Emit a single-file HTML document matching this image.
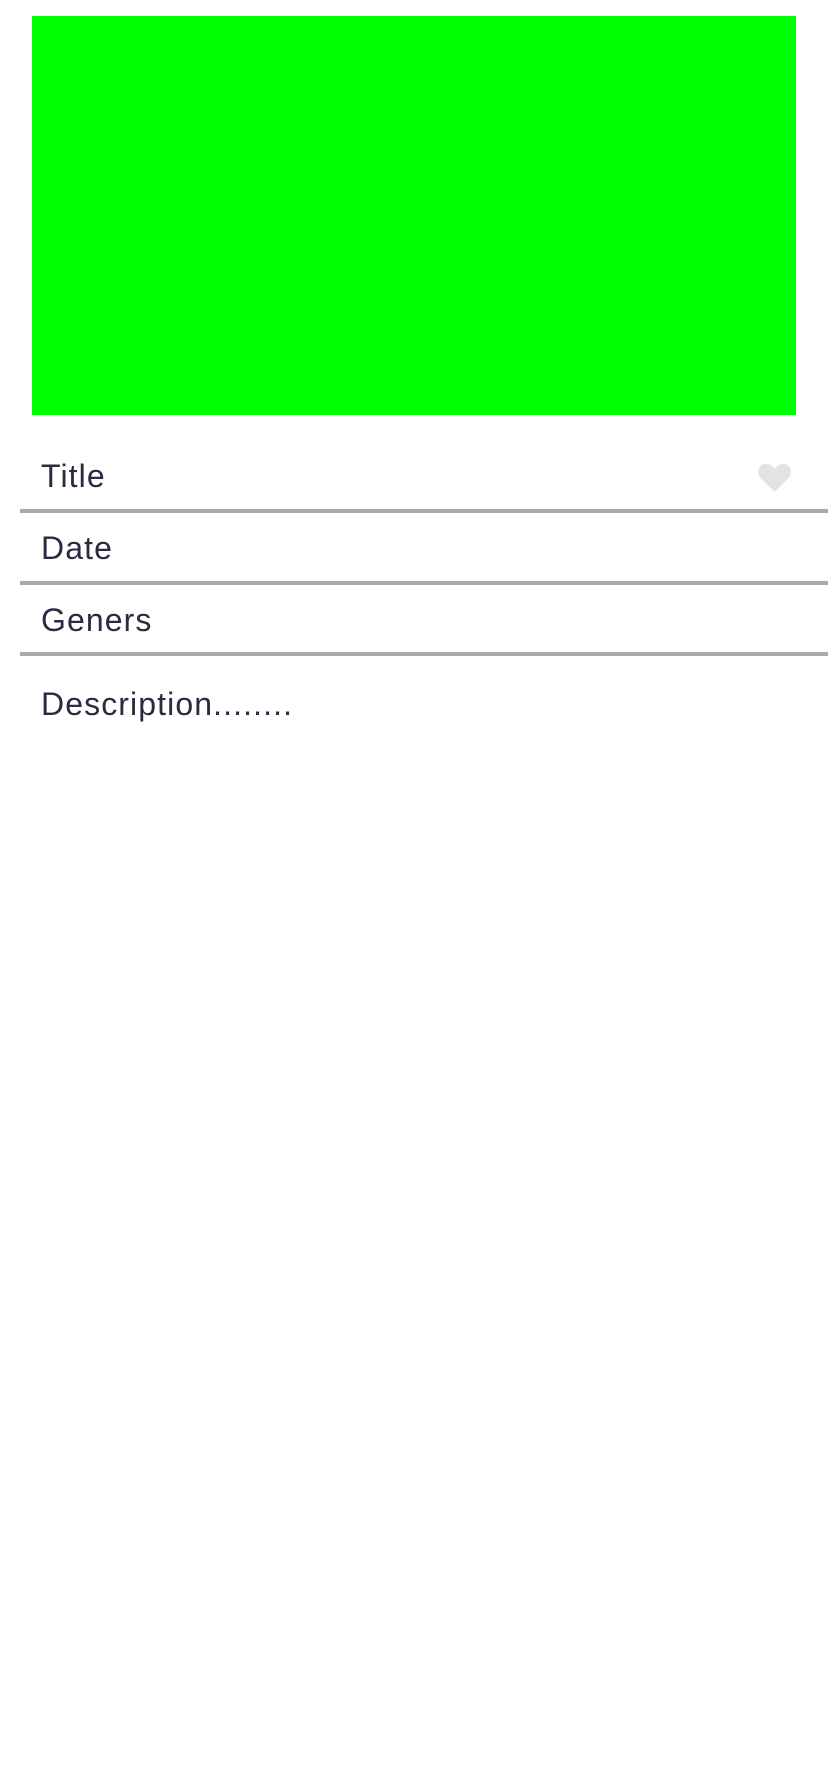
<!DOCTYPE html>
<html><head><style>
body{margin:0;width:828px;height:1792px;background:#fff;position:relative;font-family:"Liberation Sans",sans-serif;color:#2a2b40;overflow:hidden}
.g{position:absolute;left:32px;top:16px;width:764px;height:399px;background:#00ff00}
.l{position:absolute;left:20px;right:0;height:4px;background:#aaa}
.t{position:absolute;left:41px;font-size:32px;line-height:40px;letter-spacing:1.1px}
</style></head><body>
<div class="g"></div>
<div class="t" style="top:456px">Title</div>
<svg style="position:absolute;left:756px;top:459px" width="37" height="36" viewBox="0 0 24 24"><path fill="#e3e3e3" d="M12 22 3 13C0 10 0.5 4.5 5 3.5c3-.6 5.5 1 7 3 1.5-2 4-3.6 7-3 4.5 1 5 6.5 2 9.5z"/></svg>
<div class="l" style="top:509px"></div>
<div class="t" style="top:528px">Date</div>
<div class="l" style="top:581px"></div>
<div class="t" style="top:600px">Geners</div>
<div class="l" style="top:652px"></div>
<div class="t" style="top:684px">Description........</div>
</body></html>
